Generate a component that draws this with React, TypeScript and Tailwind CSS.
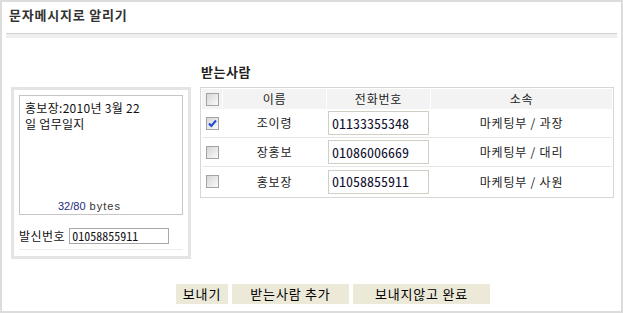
import React from 'react';

type Recipient = {
  name: string;
  phone: string;
  dept: string;
  checked?: boolean;
};

const recipients: Recipient[] = [
  { name: '조이령', phone: '01133355348', dept: '마케팅부 / 과장', checked: true },
  { name: '장홍보', phone: '01086006669', dept: '마케팅부 / 대리' },
  { name: '홍보장', phone: '01058855911', dept: '마케팅부 / 사원' },
];

const digitFont = "font-['Noto_Sans_Mono_CJK_KR','Liberation_Sans_Narrow','Noto_Sans_CJK_KR',sans-serif] tracking-normal";

function CheckBox({ checked }: { checked?: boolean }) {
  return (
    <span className="relative inline-block h-[13px] w-[13px] border border-[#a3a3a3] bg-gradient-to-br from-[#d6d6d6] to-[#fafafa]">
      {checked && (
        <svg viewBox="0 0 11 11" className="absolute inset-0 h-[11px] w-[11px]">
          <path d="M2 5.5 L4.3 8 L9 2.5" fill="none" stroke="#2149d6" strokeWidth={2} />
        </svg>
      )}
    </span>
  );
}

export default function App() {
  return (
    <div className="flex h-[313px] w-[623px] flex-col border-2 border-[#dcdcdc] bg-white font-['Noto_Sans_CJK_KR',sans-serif] text-[#333]">
      {/* Title */}
      <div className="h-[31px] pl-[7px] pt-[5px] text-[13px] font-bold leading-[16px] tracking-[0.8px] text-[#333]">
        문자메시지로 알리기
      </div>
      <div className="mx-[4px] h-[5px] border-t border-[#d0d0d0] bg-[#efefef]" />

      {/* Main */}
      <div className="flex items-start gap-[9px] pl-[9px]">
        {/* Message box */}
        <div className="mt-[49px] h-[172px] w-[180px] border-[3px] border-[#e4e4e4] p-[5px]">
          <div className="flex h-[120px] flex-col border border-[#c6c6c6] px-[5px] pb-[2px] pt-[4px] text-[12px] leading-[16px] tracking-[0.3px] text-[#111]">
            <div>홍보장:2010년 3월 22</div>
            <div>일 업무일지</div>
            <div className="mt-auto pl-[33px] font-['Liberation_Sans',sans-serif] text-[11px] leading-[12px] tracking-normal">
              <span className="text-[#1a2a80]">32/80</span>
              <span className="tracking-[1px] text-[#333]"> bytes</span>
            </div>
          </div>
          <div className="mt-[13px] flex h-[16px] items-center gap-[4px] text-[12px] text-[#111]">
            <span className="tracking-[0.5px]">발신번호</span>
            <div className={`flex h-[16px] w-[100px] items-center border border-[#a8a8a8] pl-[2px] text-[12px] leading-[14px] text-[#111] ${digitFont}`}>
              01058855911
            </div>
          </div>
          <div className="mt-[5px] h-px bg-[#ececec]" />
        </div>

        {/* Recipients */}
        <div className="mt-[26px] flex flex-col">
          <div className="mb-[7px] h-[16px] pl-px text-[13px] font-bold leading-[16px] tracking-[0.5px] text-[#222]">받는사람</div>
          <div className="w-[414px] border border-[#d6d6d6] p-px text-[12px] tracking-[0.8px] text-[#222]">
            <div className="grid h-[20px] grid-cols-[20px_103px_103px_1fr] gap-x-px">
              <div className="flex items-center justify-center bg-[#f3f3f3]">
                <CheckBox />
              </div>
              <div className="flex items-center justify-center bg-[#f3f3f3]">이름</div>
              <div className="flex items-center justify-center bg-[#f3f3f3]">전화번호</div>
              <div className="flex items-center justify-center bg-[#f3f3f3]">소속</div>
            </div>
            {recipients.map((r, i) => (
              <div
                key={r.phone}
                className={`grid h-[29px] grid-cols-[20px_103px_103px_1fr] gap-x-px ${
                  i < recipients.length - 1 ? 'border-b border-[#e6e6e6]' : 'h-[28px]'
                }`}
              >
                <div className="flex items-center justify-center">
                  <CheckBox checked={r.checked} />
                </div>
                <div className="flex items-center justify-center">{r.name}</div>
                <div className="flex items-center justify-center">
                  <div
                    className={`flex h-[24px] w-[101px] items-center border border-[#cfcfc6] pl-[3px] text-[14px] text-[#101030] ${digitFont}`}
                  >
                    {r.phone}
                  </div>
                </div>
                <div className="flex items-center justify-center">{r.dept}</div>
              </div>
            ))}
          </div>
        </div>
      </div>

      {/* Buttons */}
      <div className="mt-[25px] flex gap-[4px] pl-[174px] text-[13px] tracking-[0.8px] text-black">
        <button className="h-[20px] w-[52px] bg-[#ece9d8] leading-[20px]">보내기</button>
        <button className="h-[20px] w-[117px] bg-[#ece9d8] leading-[20px]">받는사람 추가</button>
        <button className="h-[20px] w-[137px] bg-[#ece9d8] leading-[20px]">보내지않고 완료</button>
      </div>
    </div>
  );
}
